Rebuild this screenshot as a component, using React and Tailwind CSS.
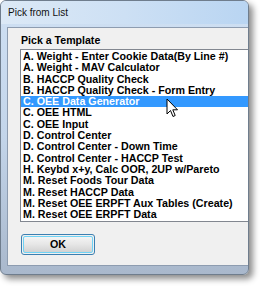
import React from "react";

const items = [
  "A. Weight - Enter Cookie Data(By Line #)",
  "A. Weight - MAV Calculator",
  "B. HACCP Quality Check",
  "B. HACCP Quality Check - Form Entry",
  "C. OEE Data Generator",
  "C. OEE HTML",
  "C. OEE Input",
  "D. Control Center",
  "D. Control Center - Down Time",
  "D. Control Center - HACCP Test",
  "H. Keybd x+y, Calc OOR, 2UP w/Pareto",
  "M. Reset Foods Tour Data",
  "M. Reset HACCP Data",
  "M. Reset OEE ERPFT Aux Tables  (Create)",
  "M. Reset OEE ERPFT Data",
];

export default function App() {
  return (
    <div className="relative w-[262px] h-[288px] bg-white overflow-hidden" style={{ fontFamily: '"Liberation Sans", Arial, sans-serif' }}>
      <div className="flex flex-col w-[249px] h-[275px] rounded-[6px] border border-[#6f7d8d] bg-gradient-to-b from-[#cfe0f3] via-[#c3d5ea] to-[#a9b8cc] shadow-[4px_4px_6px_rgba(0,0,0,0.45)]">
        <div className="h-[23px] flex items-center pl-[7px] rounded-t-[5px] bg-gradient-to-r from-[#dce9f6] via-[#cde0f4] to-[#b9d5f2] text-[10px] text-[#111]">
          Pick from List
        </div>
        <div className="h-[3px]" />
        <div className="flex flex-1 pl-[6px]">
          <div className="flex-1 flex flex-col bg-[#f0f0f0] border-l border-t border-b border-[#8d9cb0]">
            <div className="mt-[6px] pl-[13px] leading-[12px] text-[10.6px] font-bold text-black">Pick a Template</div>
            <div className="mt-[3px] ml-[12px] h-[173px] bg-white border-l border-t border-b border-[#828790] pt-px">
              {items.map((t, i) => (
                <div
                  key={i}
                  className={
                    "h-[11.3px] leading-[11.3px] pl-[2px] text-[10.7px] font-bold whitespace-nowrap overflow-hidden " +
                    (i === 4 ? "bg-[#3399ff] text-white" : "text-black")
                  }
                >
                  {t}
                </div>
              ))}
            </div>
            <div className="mt-[12px] ml-[13px] w-[74px] h-[21px] rounded-[3px] border border-[#3c7fb1] p-px">
              <div className="w-full h-full rounded-[2px] border border-[#6fd3f5] bg-gradient-to-b from-[#f4f4f4] via-[#e6e6e6] to-[#d2d2d2] flex items-center justify-center text-[10.7px] font-bold text-black">
                OK
              </div>
            </div>
          </div>
        </div>
        <div className="h-[8px]" />
      </div>
      <svg className="absolute left-[166px] top-[98px]" width="14" height="21" viewBox="0 0 14 21">
        <path d="M1 1 L1 16 L4.5 12.5 L7 18.5 L9.2 17.5 L6.8 11.8 L11.5 11.8 Z" fill="white" stroke="black" strokeWidth="1" strokeLinejoin="round" />
      </svg>
    </div>
  );
}
